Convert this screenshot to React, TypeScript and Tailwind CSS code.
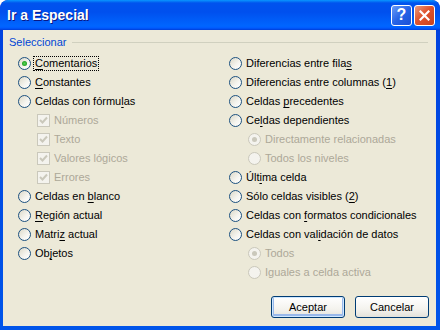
import React from "react"

const font = { fontFamily: '"Liberation Sans", Tahoma, Arial, sans-serif' }

function Radio({ checked = false, disabled = false }: { checked?: boolean; disabled?: boolean }) {
  return (
    <span
      className={`relative inline-flex h-[13px] w-[13px] shrink-0 items-center justify-center rounded-full border ${
        disabled
          ? "border-[#cac8bb] bg-[#f4f3ee]"
          : "border-[#1c5180] bg-[linear-gradient(135deg,#dcd9c8_0%,#f6f5f0_60%,#ffffff_100%)]"
      }`}
    >
      {checked && (
        <span
          className={`h-[5px] w-[5px] rounded-full ${
            disabled ? "bg-[#cac8bb]" : "bg-[radial-gradient(circle,#55d355_0%,#21a121_70%)]"
          }`}
        />
      )}
    </span>
  )
}

function Check() {
  return (
    <span className="inline-flex h-[13px] w-[13px] shrink-0 items-center justify-center border border-[#cac8bb] bg-[#f4f3ee]">
      <svg width="9" height="9" viewBox="0 0 9 9">
        <path d="M1 4 L3.5 6.5 L8 1.5" stroke="#cac8bb" strokeWidth="2" fill="none" />
      </svg>
    </span>
  )
}

function Label({ text, u, disabled }: { text: string; u?: number; disabled?: boolean }) {
  const color = disabled ? "text-[#aca899]" : "text-black"
  if (u === undefined) return <span className={color}>{text}</span>
  return (
    <span className={color}>
      {text.slice(0, u)}
      <span className="underline underline-offset-[2px]">{text[u]}</span>
      {text.slice(u + 1)}
    </span>
  )
}

type Row = { text: string; u?: number; kind: "radio" | "check" | "sub"; checked?: boolean; focus?: boolean }

const left: Row[] = [
  { text: "Comentarios", u: 0, kind: "radio", checked: true, focus: true },
  { text: "Constantes", u: 0, kind: "radio" },
  { text: "Celdas con fórmulas", u: 16, kind: "radio" },
  { text: "Números", kind: "check" },
  { text: "Texto", kind: "check" },
  { text: "Valores lógicos", kind: "check" },
  { text: "Errores", kind: "check" },
  { text: "Celdas en blanco", u: 10, kind: "radio" },
  { text: "Región actual", u: 0, kind: "radio" },
  { text: "Matriz actual", u: 5, kind: "radio" },
  { text: "Objetos", u: 2, kind: "radio" },
]

const right: Row[] = [
  { text: "Diferencias entre filas", u: 22, kind: "radio" },
  { text: "Diferencias entre columnas (1)", u: 28, kind: "radio" },
  { text: "Celdas precedentes", u: 7, kind: "radio" },
  { text: "Celdas dependientes", u: 2, kind: "radio" },
  { text: "Directamente relacionadas", kind: "sub", checked: true },
  { text: "Todos los niveles", kind: "sub" },
  { text: "Última celda", u: 3, kind: "radio" },
  { text: "Sólo celdas visibles (2)", u: 22, kind: "radio" },
  { text: "Celdas con formatos condicionales", u: 11, kind: "radio" },
  { text: "Celdas con validación de datos", u: 14, kind: "radio" },
  { text: "Todos", kind: "sub", checked: true },
  { text: "Iguales a celda activa", kind: "sub" },
]

function Option({ row }: { row: Row }) {
  const disabled = row.kind !== "radio"
  return (
    <div className={`flex h-[19px] items-center ${row.kind === "radio" ? "" : "pl-[19px]"}`}>
      {row.kind === "check" ? <Check /> : <Radio checked={row.checked} disabled={disabled} />}
      <span
        className={`ml-[3px] px-[1px] leading-[13px] ${
          row.focus ? "outline outline-1 outline-dotted outline-black" : ""
        }`}
      >
        <Label text={row.text} u={row.u} disabled={disabled} />
      </span>
    </div>
  )
}

function XpButton({ label, isDefault }: { label: string; isDefault?: boolean }) {
  return (
    <button
      className={`h-[22px] w-[74px] rounded-[3px] border border-[#003c74] text-[11px] text-black bg-[linear-gradient(to_bottom,#ffffff_0%,#f4f3ee_60%,#e3e2da_100%)] ${
        isDefault ? "shadow-[inset_0_0_0_1px_#cee7ff,inset_0_-1px_0_2px_#98b8ea]" : ""
      }`}
    >
      {label}
    </button>
  )
}

export default function App() {
  return (
    <div style={font} className="h-[330px] w-[440px] overflow-hidden rounded-t-[8px] bg-[#0831d9] text-[11px]">
      <div className="flex h-[330px] flex-col rounded-t-[8px] bg-[linear-gradient(to_bottom,#0997ff_0px,#0053ee_3px,#0050ee_12px,#0066ff_26px,#005bff_28px,#003dd7_30px,#0042df_31px,#0055ea_100%)] px-[3px] pb-[4px] pr-[4px]">
        {/* title bar */}
        <div className="flex h-[30px] shrink-0 items-center pl-[4px] pr-[1px]">
          <span className="text-[14px] font-bold text-white [text-shadow:1px_1px_#0a1883]">Ir a Especial</span>
          <div className="ml-auto flex gap-[2px]">
            <div className="flex h-[21px] w-[21px] items-center justify-center rounded-[3px] border border-white bg-[linear-gradient(135deg,#6a9cf8_0%,#2663e6_50%,#1b4fd6_100%)] text-[16px] font-bold text-white">
              ?
            </div>
            <div className="flex h-[21px] w-[21px] items-center justify-center rounded-[3px] border border-white bg-[linear-gradient(135deg,#e89c7f_0%,#e0532e_45%,#c8431f_100%)]">
              <svg width="11" height="11" viewBox="0 0 11 11">
                <path d="M1.5 1.5 L9.5 9.5 M9.5 1.5 L1.5 9.5" stroke="white" strokeWidth="2.2" strokeLinecap="square" />
              </svg>
            </div>
          </div>
        </div>

        {/* body */}
        <div className="flex flex-1 flex-col bg-[#ece9d8] px-[6px] pt-[6px]">
          <div className="flex items-center">
            <span className="leading-[13px] text-[#0046d5]">Seleccionar</span>
            <div className="ml-[6px] mr-[2px] h-[1px] flex-1 bg-[#d0d0bf]" />
          </div>

          <div className="mt-[5px] grid grid-cols-[211px_1fr] pl-[9px]">
            <div>
              {left.map((r) => (
                <Option key={r.text} row={r} />
              ))}
            </div>
            <div>
              {right.map((r) => (
                <Option key={r.text} row={r} />
              ))}
            </div>
          </div>

          <div className="mt-auto mb-[8px] flex justify-end gap-[10px] pr-[1px]">
            <XpButton label="Aceptar" isDefault />
            <XpButton label="Cancelar" />
          </div>
        </div>
      </div>
    </div>
  )
}
